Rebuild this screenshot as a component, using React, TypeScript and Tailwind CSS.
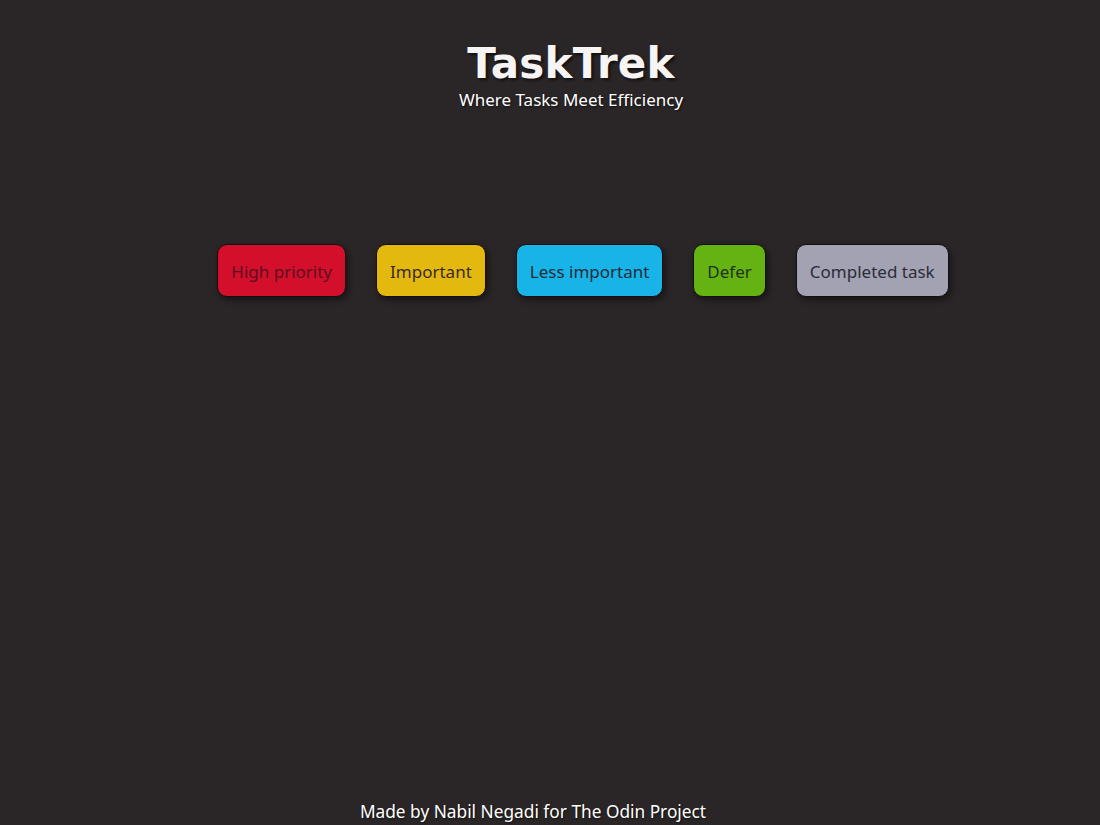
import React from 'react';

const priorities = [
    { label: 'High priority', className: 'bg-[#d30f2c] text-[#5c1020]' },
    { label: 'Important', className: 'bg-[#e4b90f] text-[#3a2a20]' },
    { label: 'Less important', className: 'bg-[#18b4e8] text-[#1f2d3a]' },
    { label: 'Defer', className: 'bg-[#64b312] text-[#23301a]' },
    { label: 'Completed task', className: 'bg-[#a2a2b2] text-[#2c2c38]' },
];

export default function App() {
    return (
        <div className="min-h-[825px] bg-[#2a2527] flex flex-col font-['Noto_Sans',sans-serif] text-white">
            <header className="flex flex-col items-center pt-[37px] pl-[42px]">
                <h1 className="font-['DejaVu_Sans',sans-serif] font-bold text-[42px] leading-[54px] tracking-[0.2px] text-[#f7f4f4] [text-shadow:2px_2px_3px_rgba(0,0,0,0.6)]">
                    TaskTrek
                </h1>
                <p className="text-[17px] leading-[22px] -mt-[2px] [text-shadow:1px_1px_2px_rgba(0,0,0,0.6)]">
                    Where Tasks Meet Efficiency
                </p>
            </header>

            <main className="flex-1">
                <div className="flex justify-center gap-[30px] mt-[133px] pl-[66px]">
                    {priorities.map((p) => (
                        <button
                            key={p.label}
                            className={`h-[53px] px-[13px] pt-[3px] rounded-[10px] border border-[#141012] text-[17px] shadow-[2px_3px_6px_rgba(0,0,0,0.45)] ${p.className}`}
                        >
                            {p.label}
                        </button>
                    ))}
                </div>
            </main>

            <footer className="flex justify-center pr-[34px] pb-[1px]">
                <p className="text-[17.3px] leading-[24px] [text-shadow:1px_1px_2px_rgba(0,0,0,0.6)]">
                    Made by Nabil Negadi for The Odin Project
                </p>
            </footer>
        </div>
    );
}
